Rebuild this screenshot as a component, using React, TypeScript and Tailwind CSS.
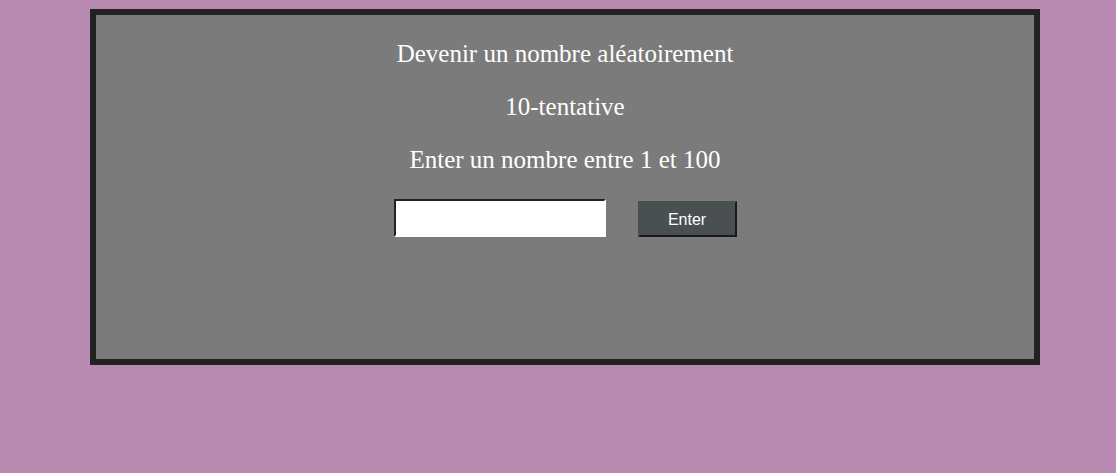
export default function App() {
  return (
    <div className="min-h-[473px] w-full bg-[#ba8bb2] pt-[9px]">
      <div className="ml-[90px] h-[356px] w-[950px] border-[6px] border-[#222222] bg-[#7b7b7b] pt-[24px] text-center font-['Liberation_Serif',serif] text-[25px] leading-[29px] text-white">
        <p>Devenir un nombre aléatoirement</p>
        <p className="mt-[24px]">10-tentative</p>
        <p className="mt-[24px]">Enter un nombre entre 1 et 100</p>
        <div className="mt-[25px] flex items-start justify-center gap-[32px]">
          <input
            type="text"
            className="h-[38px] w-[212px] border-2 border-t-[#222] border-l-[#222] border-r-white border-b-white bg-white px-1 text-black outline-none"
          />
          <button className="mt-[2px] h-[36px] w-[99px] border-2 border-t-[#4a5052] border-l-[#4a5052] border-r-[#1a1a1a] border-b-[#1a1a1a] bg-[#4a5052] pt-[1px] font-['Liberation_Sans',sans-serif] text-[16px] leading-none text-white">
            Enter
          </button>
        </div>
      </div>
    </div>
  );
}
